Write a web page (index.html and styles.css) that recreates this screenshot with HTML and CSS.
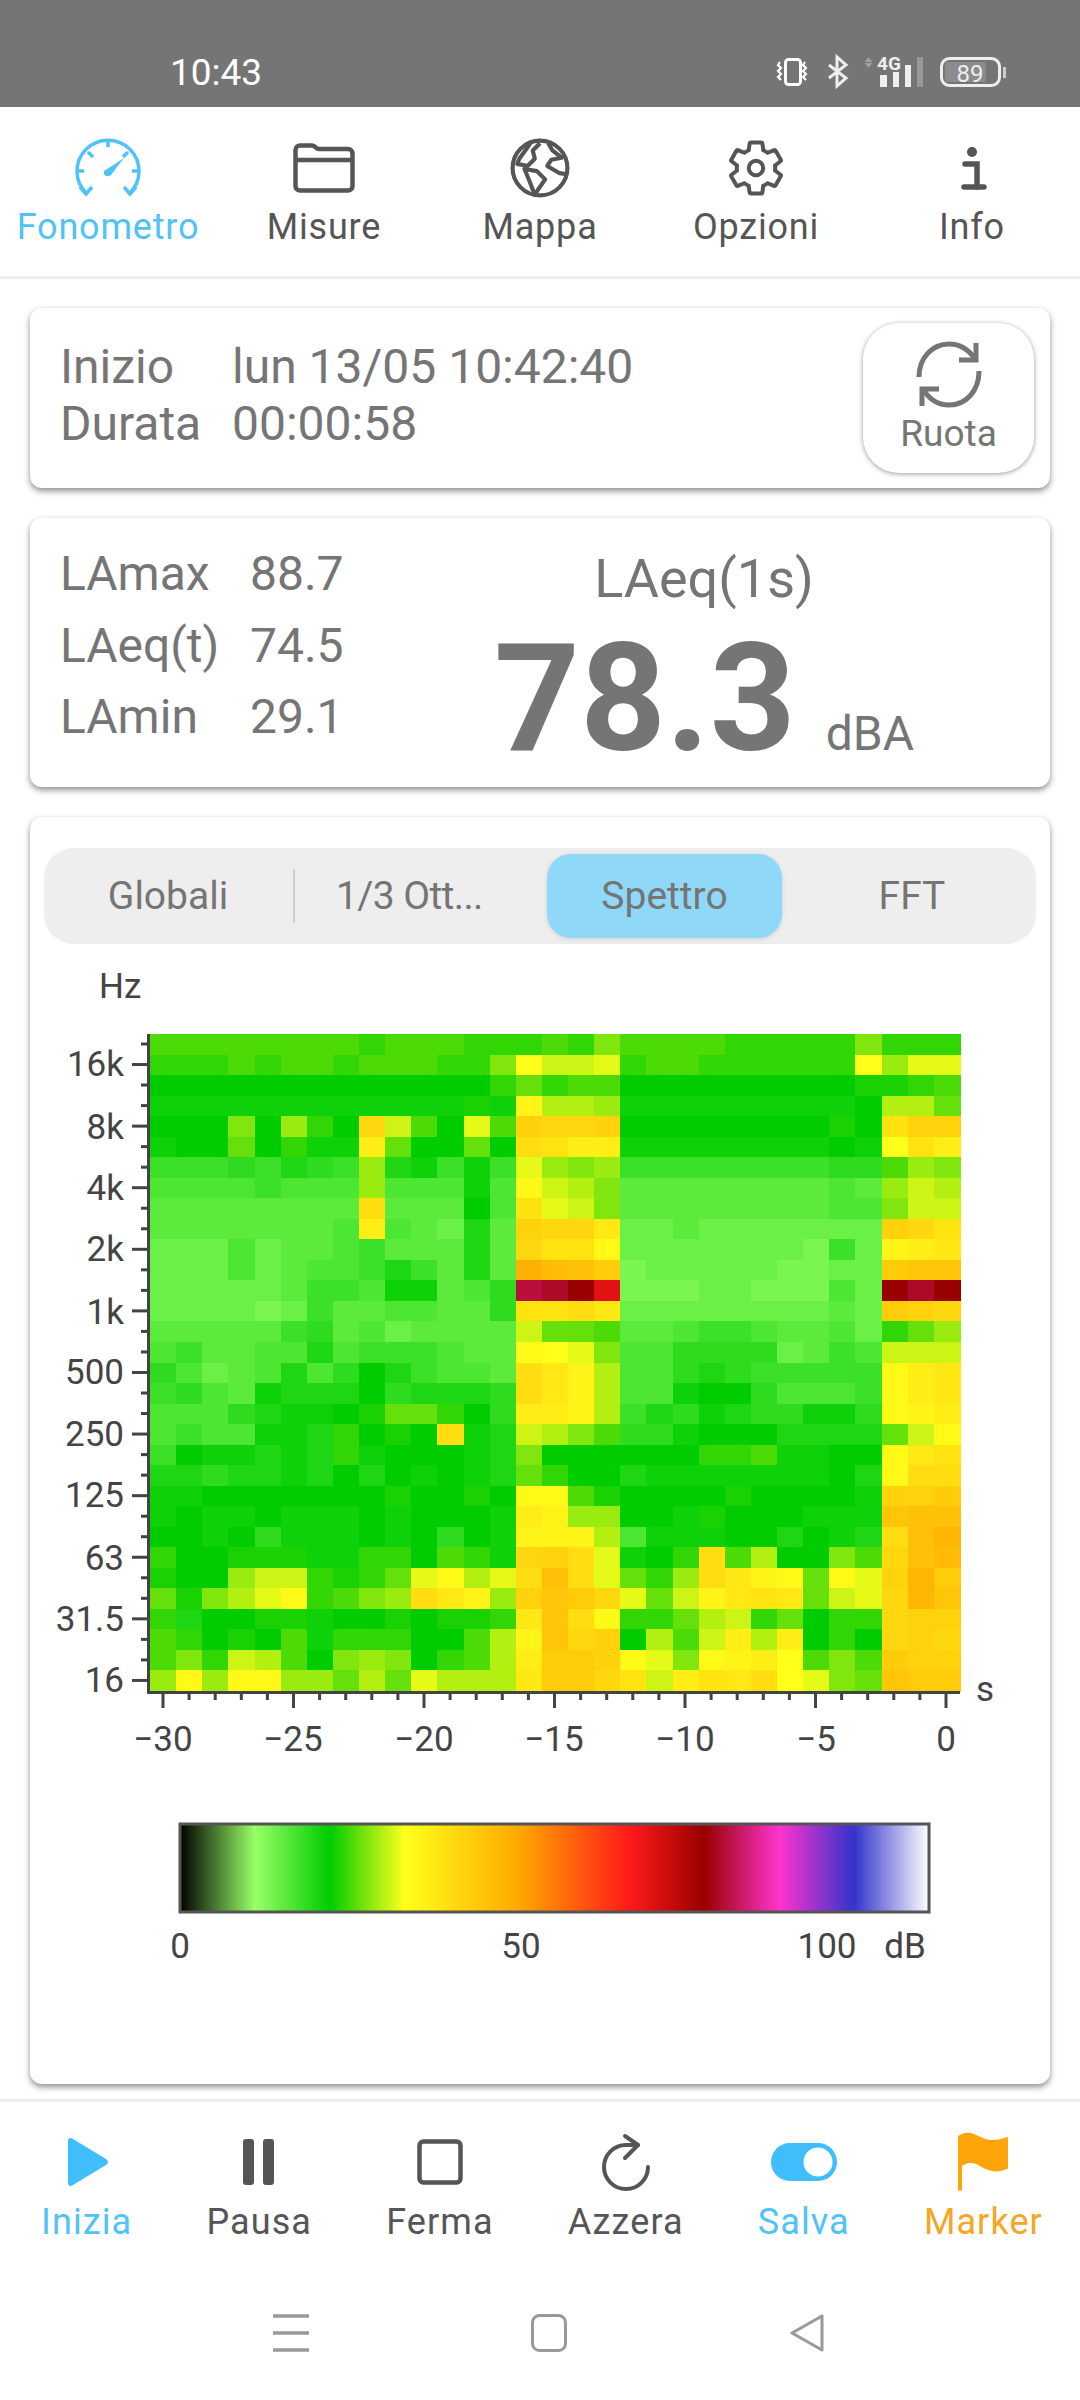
FILE: index.html
```html
<!DOCTYPE html>
<html lang="it">
<head>
  <meta charset="UTF-8">
  <meta name="viewport" content="width=device-width, initial-scale=1.0">
  <title>Fonometro</title>
  <link rel="stylesheet" href="styles.css">
</head>
<body>
  <!-- Status bar -->
  <div class="status-bar">
    <span class="clock">10:43</span>
    <svg class="status-icons" width="233" height="52" viewBox="0 0 233 52">
      <g transform="translate(-775 -46)">
        <rect x="785.5" y="59.5" width="15" height="25" rx="3" fill="none" stroke="#fff" stroke-width="3"/>
        <path d="M780 62l-2 3 3 3-3 3 3 3-3 3 3 3M805 62l-2 3 3 3-3 3 3 3-3 3 3 3" fill="none" stroke="#fff" stroke-width="2.2"/>
        <path d="M829 65l17 13-9 8V57l9 8-17 13" fill="none" stroke="#eee" stroke-width="3"/>
        <path d="M868.5 57l4 5h-8zM868.5 68l4-5h-8z" fill="#a0a0a0"/>
        <text class="net-label" x="877" y="70">4G</text>
        <rect x="880" y="75" width="7" height="12" fill="#eee"/>
        <rect x="893" y="72" width="6" height="15" fill="#eee"/>
        <rect x="905" y="65" width="6" height="22" fill="#eee"/>
        <rect x="917" y="57" width="6" height="30" fill="#999"/>
        <rect x="941.5" y="58.5" width="58" height="27" rx="8" fill="none" stroke="#eee" stroke-width="3"/>
        <rect x="945" y="62" width="41" height="20" rx="3" fill="#8c8c8c"/>
        <rect x="1003" y="67" width="3" height="11" fill="#ccc"/>
        <text class="battery-label" x="970" y="81.5">89</text>
      </g>
    </svg>
  </div>

  <!-- Top tabs -->
  <nav class="tabs">
    <div class="tab active">
      <div class="icon-box">
        <svg width="66" height="60" viewBox="0 0 66 60" fill="none" stroke="currentColor" stroke-width="3.5">
          <path d="M11 55A31 31 0 1 1 55 55"/>
          <path d="M5 49l6 7 6-7M49 49l6 7 6-7"/>
          <path d="M33 2v7M13 14l5 5M53 14l-5 5M2 33h7M64 33h-7"/>
          <path d="M49 20L36 37q-3 2-5 1-3-2-2-5z" fill="currentColor" stroke="none"/>
        </svg>
      </div>
      <span>Fonometro</span>
    </div>
    <div class="tab">
      <div class="icon-box">
        <svg width="62" height="50" viewBox="0 0 62 50" fill="none" stroke="currentColor" stroke-width="4.5">
          <path d="M2.5 43V7A4.5 4.5 0 0 1 7 2.5h12c3 0 4 3.5 7 3.5h29a4.5 4.5 0 0 1 4.5 4.5V43a4.5 4.5 0 0 1-4.5 4.5H7A4.5 4.5 0 0 1 2.5 43z"/>
          <path d="M2.5 17h57"/>
        </svg>
      </div>
      <span>Misure</span>
    </div>
    <div class="tab">
      <div class="icon-box">
        <svg width="60" height="60" viewBox="0 0 58 58" fill="none" stroke="currentColor" stroke-width="4" stroke-linejoin="round">
          <circle cx="29" cy="29" r="26.5"/>
          <path d="M21 3l-4 6-8 11-2 5 10 2 7-7-2-8 7-7"/>
          <path d="M14 30l12 2 8 8-7 10-3 5-5-13z"/>
          <path d="M37 5l4 7 9 7-10 2-4 6 12 7 7 1"/>
        </svg>
      </div>
      <span>Mappa</span>
    </div>
    <div class="tab">
      <div class="icon-box">
        <svg width="64" height="64" viewBox="0 0 24 24" fill="none" stroke="currentColor" stroke-width="1.5">
          <path d="M19.14 12.94c.04-.3.06-.61.06-.94 0-.32-.02-.64-.07-.94l2.03-1.58c.18-.14.23-.41.12-.61l-1.92-3.32c-.12-.22-.37-.29-.59-.22l-2.39.96c-.5-.38-1.03-.7-1.62-.94l-.36-2.54c-.04-.24-.24-.41-.48-.41h-3.84c-.24 0-.43.17-.47.41l-.36 2.54c-.59.24-1.13.57-1.62.94l-2.39-.96c-.22-.08-.47 0-.59.22L2.74 8.87c-.12.21-.08.47.12.61l2.03 1.58c-.05.3-.09.63-.09.94s.02.64.07.94l-2.03 1.58c-.18.14-.23.41-.12.61l1.92 3.32c.12.22.37.29.59.22l2.39-.96c.5.38 1.03.7 1.62.94l.36 2.54c.05.24.24.41.48.41h3.84c.24 0 .44-.17.47-.41l.36-2.54c.59-.24 1.13-.56 1.62-.94l2.39.96c.22.08.47 0 .59-.22l1.92-3.32c.12-.22.07-.47-.12-.61l-2.01-1.58z"/>
          <circle cx="12" cy="12" r="2.7"/>
        </svg>
      </div>
      <span>Opzioni</span>
    </div>
    <div class="tab">
      <div class="icon-box">
        <svg width="30" height="58" viewBox="0 0 30 58" fill="none" stroke="currentColor" stroke-width="5.5" stroke-linecap="round">
          <circle cx="15" cy="13" r="5" fill="currentColor" stroke="none"/>
          <path d="M8 25h12v23"/>
          <path d="M7 48h20"/>
        </svg>
      </div>
      <span>Info</span>
    </div>
  </nav>

  <main class="content">
    <!-- Session times -->
    <section class="card session">
      <div class="session-info">
        <span>Inizio</span><span>lun 13/05 10:42:40</span>
        <span>Durata</span><span>00:00:58</span>
      </div>
      <div class="rotate-btn">
        <svg width="66" height="67" viewBox="0 0 66 67" fill="none" stroke="currentColor" stroke-width="5">
          <path d="M3 36C3 17 16 3 33 3c11 0 20 6 26 15"/>
          <path d="M60 2v17H43"/>
          <path d="M63 30c0 20-13 34-30 34-11 0-20-6-26-16"/>
          <path d="M6 65V48h17"/>
        </svg>
        <span>Ruota</span>
      </div>
    </section>

    <!-- Sound levels -->
    <section class="card levels">
      <div class="level-list">
        <span>LAmax</span><span>88.7</span>
        <span>LAeq(t)</span><span>74.5</span>
        <span>LAmin</span><span>29.1</span>
      </div>
      <div class="readout">
        <div class="readout-title">LAeq(1s)</div>
        <div class="readout-value"><strong>78.3</strong><span>dBA</span></div>
      </div>
    </section>

    <!-- Spectrogram -->
    <section class="card spectrum">
      <div class="segments">
        <div class="segment with-divider">Globali</div>
        <div class="segment clipped">1/3 Ott...</div>
        <div class="segment selected">Spettro</div>
        <div class="segment">FFT</div>
      </div>
      <svg id="chart" class="chart" width="1020" height="1140" viewBox="30 943 1020 1140">
        <defs>
          <linearGradient id="dbScale">
            <stop offset="0" stop-color="#000"/>
            <stop offset="0.1" stop-color="#99ff66"/>
            <stop offset="0.2" stop-color="#00cc00"/>
            <stop offset="0.3" stop-color="#ffff1a"/>
            <stop offset="0.45" stop-color="#ffaa00"/>
            <stop offset="0.6" stop-color="#ff1a1a"/>
            <stop offset="0.7" stop-color="#990000"/>
            <stop offset="0.8" stop-color="#ff33cc"/>
            <stop offset="0.9" stop-color="#3333cc"/>
            <stop offset="1" stop-color="#fff"/>
          </linearGradient>
        </defs>
        <g id="cells"></g>
        <g id="ticks"></g>

        <g class="axis-text">
          <text x="99" y="997">Hz</text>
          <g text-anchor="end">
            <text x="124" y="1075">16k</text>
            <text x="124" y="1138">8k</text>
            <text x="124" y="1199">4k</text>
            <text x="124" y="1260">2k</text>
            <text x="124" y="1323">1k</text>
            <text x="124" y="1383">500</text>
            <text x="124" y="1445">250</text>
            <text x="124" y="1506">125</text>
            <text x="124" y="1569">63</text>
            <text x="124" y="1630">31.5</text>
            <text x="124" y="1691">16</text>
          </g>
          <text x="976" y="1700">s</text>
          <g text-anchor="middle">
            <text x="163" y="1750">−30</text>
            <text x="293" y="1750">−25</text>
            <text x="424" y="1750">−20</text>
            <text x="554" y="1750">−15</text>
            <text x="685" y="1750">−10</text>
            <text x="816" y="1750">−5</text>
            <text x="946" y="1750">0</text>
          </g>
        </g>

        <rect x="180" y="1823" width="749" height="88" fill="url(#dbScale)" stroke="#555" stroke-width="3"/>
        <g class="axis-text" text-anchor="middle">
          <text x="180" y="1957">0</text>
          <text x="521" y="1957">50</text>
          <text x="827" y="1957">100</text>
          <text x="905" y="1957">dB</text>
        </g>
      </svg>
    </section>
  </main>

  <!-- Recorder actions -->
  <footer class="actions">
    <div class="action blue">
      <div class="icon-box">
        <svg width="44" height="50" viewBox="0 0 44 50">
          <path d="M3 5Q3-1 8 2l33 20q4 3 0 6L8 48q-5 3-5-3z" fill="currentColor"/>
        </svg>
      </div>
      <span>Inizia</span>
    </div>
    <div class="action">
      <div class="icon-box">
        <svg width="32" height="46" viewBox="0 0 32 46" fill="currentColor">
          <rect x="0" y="0" width="11" height="46" rx="3"/>
          <rect x="20" y="0" width="11" height="46" rx="3"/>
        </svg>
      </div>
      <span>Pausa</span>
    </div>
    <div class="action">
      <div class="icon-box">
        <svg width="46" height="46" viewBox="0 0 46 46" fill="none" stroke="currentColor" stroke-width="4.5">
          <rect x="2.5" y="2.5" width="41" height="41" rx="4"/>
        </svg>
      </div>
      <span>Ferma</span>
    </div>
    <div class="action">
      <div class="icon-box">
        <svg width="50" height="58" viewBox="0 0 50 58" fill="none" stroke="currentColor" stroke-width="4" stroke-linecap="round" stroke-linejoin="round">
          <path d="M37 12H25A22 22 0 1 0 47 34"/>
          <path d="M24 3l13 9-13 13"/>
        </svg>
      </div>
      <span>Azzera</span>
    </div>
    <div class="action blue">
      <div class="icon-box">
        <svg width="66" height="38" viewBox="0 0 66 38">
          <rect width="66" height="38" rx="19" fill="currentColor"/>
          <circle cx="47" cy="19" r="14.5" fill="#fff"/>
        </svg>
      </div>
      <span>Salva</span>
    </div>
    <div class="action orange">
      <div class="icon-box">
        <svg width="54" height="60" viewBox="0 0 54 60" fill="currentColor">
          <rect x="2" y="4" width="4" height="55" rx="2"/>
          <path d="M2 4C6 1 11 0 15 1c7 2 13 7 21 7 5 0 11-1 15-3 1 0 1 1 1 2v28c0 1 0 2-1 2-5 2-10 3-15 2-8-1-14-8-21-8-4 0-9 2-11 5z"/>
        </svg>
      </div>
      <span>Marker</span>
    </div>
  </footer>

  <!-- System navigation -->
  <div class="system-nav">
    <div class="system-key">
      <svg width="36" height="38" viewBox="0 0 36 38" fill="none" stroke="currentColor" stroke-width="3.5">
        <path d="M0 2h36M0 19h36M0 36h36"/>
      </svg>
    </div>
    <div class="system-key">
      <svg width="36" height="38" viewBox="0 0 36 38" fill="none" stroke="currentColor" stroke-width="3">
        <rect x="1.5" y="1.5" width="33" height="35" rx="7"/>
      </svg>
    </div>
    <div class="system-key">
      <svg width="36" height="38" viewBox="0 0 36 38" fill="none" stroke="currentColor" stroke-width="3" stroke-linejoin="round">
        <path d="M33 2v34L3 19z"/>
      </svg>
    </div>
  </div>

  <script src="heatmap.js"></script>
</body>
</html>
```

FILE: styles.css
```css
* {
  box-sizing: border-box;
}
body {
  display: flex;
  flex-direction: column;
  width: 1080px;
  height: 2400px;
  margin: 0;
  overflow: hidden;
  background-color: #ffffff;
  color: #757575;
  font-family: Roboto, "Noto Sans", sans-serif;
}
.icon-box {
  display: flex;
  align-items: center;
  justify-content: center;
  height: 58px;
}

/* status bar */
.status-bar {
  display: flex;
  justify-content: space-between;
  height: 107px;
  padding: 46px 72px 0 170px;
  background-color: #757575;
  color: #ffffff;
}
.clock {
  margin-top: 8px;
  font-size: 37px;
  line-height: 38px;
}
.net-label {
  fill: #eeeeee;
  font-size: 19px;
  font-weight: 700;
}
.battery-label {
  fill: #eeeeee;
  font-size: 24px;
  text-anchor: middle;
}

/* top tabs */
.tabs {
  display: flex;
  height: 172px;
  padding-top: 32px;
  border-bottom: 3px solid #eeeeee;
}
.tab {
  display: flex;
  flex: 1;
  flex-direction: column;
  align-items: center;
  color: #555555;
  font-size: 36px;
  letter-spacing: 0.8px;
  line-height: 42px;
}
.tab span {
  margin-top: 9px;
}
.tab.active {
  color: #4fc3f7;
}

/* cards */
.content {
  display: flex;
  flex-direction: column;
  gap: 30px;
  padding: 29px 30px 0;
  height: 1821px;
}
.card {
  border-radius: 12px;
  background-color: #ffffff;
  box-shadow: 0 3px 6px rgba(0, 0, 0, 0.45);
}
.session {
  display: flex;
  justify-content: space-between;
  height: 180px;
  padding: 15px 16px 0 30px;
}
.session-info {
  display: grid;
  grid-template-columns: 172px auto;
  align-content: start;
  padding-top: 15px;
  font-size: 48px;
  line-height: 57px;
}
.rotate-btn {
  display: flex;
  flex-direction: column;
  align-items: center;
  width: 171px;
  height: 150px;
  padding-top: 18px;
  border-radius: 36px;
  box-shadow: 0 1px 5px rgba(0, 0, 0, 0.4);
  font-size: 37px;
  line-height: 42px;
}
.rotate-btn span {
  margin-top: 5px;
}
.levels {
  display: flex;
  justify-content: space-between;
  height: 269px;
  padding: 20px 112px 0 30px;
}
.level-list {
  display: grid;
  grid-template-columns: 190px auto;
  align-content: start;
  font-size: 48px;
  line-height: 71.5px;
}
.readout {
  width: 468px;
  padding-top: 9px;
}
.readout-title {
  font-size: 54px;
  line-height: 64px;
  text-align: center;
}
.readout-value {
  display: flex;
  align-items: baseline;
  gap: 30px;
  margin-top: 23px;
  padding-left: 24px;
  font-size: 48px;
  line-height: 130px;
}
.readout-value strong {
  font-size: 150px;
  font-weight: 700;
}

/* spectrum card */
.spectrum {
  height: 1267px;
  padding: 31px 14px 0;
}
.segments {
  display: grid;
  grid-template-columns: repeat(4, 1fr);
  height: 96px;
  padding: 6px 0;
  border-radius: 30px;
  background-color: #eeeeee;
  font-size: 39px;
}
.segment {
  position: relative;
  display: flex;
  align-items: center;
  justify-content: center;
}
.segment.with-divider::after {
  content: "";
  position: absolute;
  top: 15px;
  right: -3px;
  width: 2px;
  height: 54px;
  background-color: #cccccc;
}
.segment.clipped {
  justify-content: flex-start;
  padding-left: 44px;
  letter-spacing: -0.6px;
}
.segment.selected {
  margin: 0 6px 0 7px;
  border-radius: 24px;
  background-color: #90d8f8;
  box-shadow: 0 1px 5px rgba(0, 0, 0, 0.12);
}
.chart {
  display: block;
  margin-left: -14px;
}
.axis-text {
  fill: #444444;
  font-size: 35px;
}

/* bottom actions */
.actions {
  display: flex;
  justify-content: space-around;
  height: 190px;
  margin-top: -1px;
  padding: 31px 0 0 4px;
  border-top: 3px solid #eeeeee;
}
.action {
  display: flex;
  flex-direction: column;
  align-items: center;
  color: #555555;
  font-size: 36px;
  letter-spacing: 1.1px;
  line-height: 42px;
}
.action span {
  margin-top: 10px;
}
.action.blue {
  color: #4fc3f7;
}
.action.blue .icon-box {
  color: #40bdfb;
}
.action.orange {
  color: #f5a623;
}
.action.orange .icon-box {
  color: #ffa50a;
}

/* android keys */
.system-nav {
  display: flex;
  justify-content: center;
  padding: 25px 0 0 18px;
  color: #999999;
}
.system-key {
  display: flex;
  justify-content: center;
  width: 258px;
}
```

FILE: heatmap.js
```js
// Spectrogram cells and axis ticks for the chart.
// One row per third-octave band, top band first, one letter per second.
// Spaces only group the columns for reading.
const rows = [
  'nnnnnnnnmnnnmm mnmp nnnnmmmmm p mmm',
  'mmmnmnnmnnnmmp usst mnnmmmmmm u qtt',
  'kkkkkkkkkkkkkm omnn kkkkkkkkk l lmn',
  'jjjjjjjjjjjjlj wrrq jjjjjjjjj k rro',
  'kkkpkqmkBsnktn CBBC kkkkkkkkl k zCC',
  'jkkokmjjxokkok Azxx jjjjjjjjk j uzx',
  'ggghgihgqijgjg tqpq ggggggggh h nqp',
  'ffffgfffqfffjf vsrp eeeeeeeef e qsr',
  'eeeeeeeeAeeekf ztsp eeeeeeeef f pss',
  'eeeeeeefxfedie CBBy ddedddddd d CBz',
  'dddfdeefgeeeie Bzzv dddddddcg d wxy',
  'dddfdeffgigeie IGFD cdddddccd d DEE',
  'dddddeggfjjefh @!81 cccddcccf d 8!8',
  'ddddcdgeeffeeh zzAy dddddddde d DCB',
  'eeeeeghefdeeee soon eefggfeef d moq',
  'fgeeffifgggfee vutp ffhhhhdeg f sss',
  'hfdefifhkigffe Aywr ffhihgggg g vxy',
  'ghfejiiikhiiih Aywr ffjkkhfff g vxy',
  'fffhijjkloomkh xxwr gihjihhjj h vwx',
  'fgffjjimklkAji srpn hhjkkkiii i osv',
  'gkjjijimjkkkji pkkk kkkmmnjjk k vyz',
  'iihiijikikjkji omkk ijjjjjjjk i vAA',
  'jjkkkkkkklkklk vvnl kkkklkkkk j CCD',
  'jkjjkjjjkjkkkj xwqq kkjlkkkjj j EFF',
  'kkjkhjjjkjkhkj wwwr fjjjkkikj i AFH',
  'mkkllljjmmknmj BCAt jkmAnrkkp n BFG',
  'lkkqssmlmotvrt AFAt omqAywvov t CHD',
  'olprtvmnpqAywq CEDB toswyzyos t BHE',
  'mikklljkklkllm yEAv mmorsmokm m BCC',
  'nmklknjmmmkknr wEBC krnsxrxkm k BCB',
  'npmsrnkpqpkmnr xDDC vtpvwxunp n DCC',
  'qvqvvqqorotrrr yDDB zsxzyAutp o EDD',
];

// a = 10 dB, each following character is one more dB
const levels = 'abcdefghijklmnopqrstuvwxyzABCDEFGHIJKLMNOPQRSTUVWXYZ0123456789!@';

const scale = [
  [0, [0, 0, 0]],
  [10, [153, 255, 102]],
  [20, [0, 204, 0]],
  [30, [255, 255, 26]],
  [45, [255, 170, 0]],
  [60, [255, 26, 26]],
  [70, [153, 0, 0]],
  [80, [255, 51, 204]],
  [90, [51, 51, 204]],
  [100, [255, 255, 255]],
];

function colorFor(db) {
  for (let i = 1; i < scale.length; i++) {
    if (db <= scale[i][0]) {
      const [d0, c0] = scale[i - 1];
      const [d1, c1] = scale[i];
      const t = (db - d0) / (d1 - d0);
      const mix = c0.map((v, k) => Math.round(v + (c1[k] - v) * t));
      return `rgb(${mix.join(',')})`;
    }
  }
  return 'rgb(255,255,255)';
}

const SVG_NS = 'http://www.w3.org/2000/svg';

function addRect(parent, x, y, w, h, fill) {
  const rect = document.createElementNS(SVG_NS, 'rect');
  rect.setAttribute('x', x);
  rect.setAttribute('y', y);
  rect.setAttribute('width', w);
  rect.setAttribute('height', h);
  rect.setAttribute('fill', fill);
  parent.appendChild(rect);
}

const plot = { left: 150, top: 1033, cellW: 810 / 31, cellH: 657 / 32 };
const cells = document.getElementById('cells');
cells.setAttribute('shape-rendering', 'crispEdges');

rows.forEach((row, r) => {
  [...row.replace(/ /g, '')].forEach((ch, c) => {
    const db = levels.indexOf(ch) + 10;
    const x = plot.left + c * plot.cellW;
    const y = plot.top + r * plot.cellH;
    addRect(cells, x, y, plot.cellW + 0.5, plot.cellH + 0.5, colorFor(db));
  });
});

// Axes: left and bottom lines, then a tick per band and per second
const ticks = document.getElementById('ticks');
const axisColor = '#444444';
addRect(ticks, 147, 1033, 3, 660, axisColor);
addRect(ticks, 147, 1690, 813, 3, axisColor);

for (let i = 0; i < 32; i++) {
  const y = 1043 + i * 20.53;
  const major = i % 3 === 1;
  const x = major ? 132 : 141;
  addRect(ticks, x, y - 1.5, 147 - x, 3, axisColor);
}
for (let i = 0; i < 31; i++) {
  const x = 163 + i * 26.1;
  const h = i % 5 === 0 ? 14 : 6;
  addRect(ticks, x - 1.5, 1693, 3, h, axisColor);
}
```
